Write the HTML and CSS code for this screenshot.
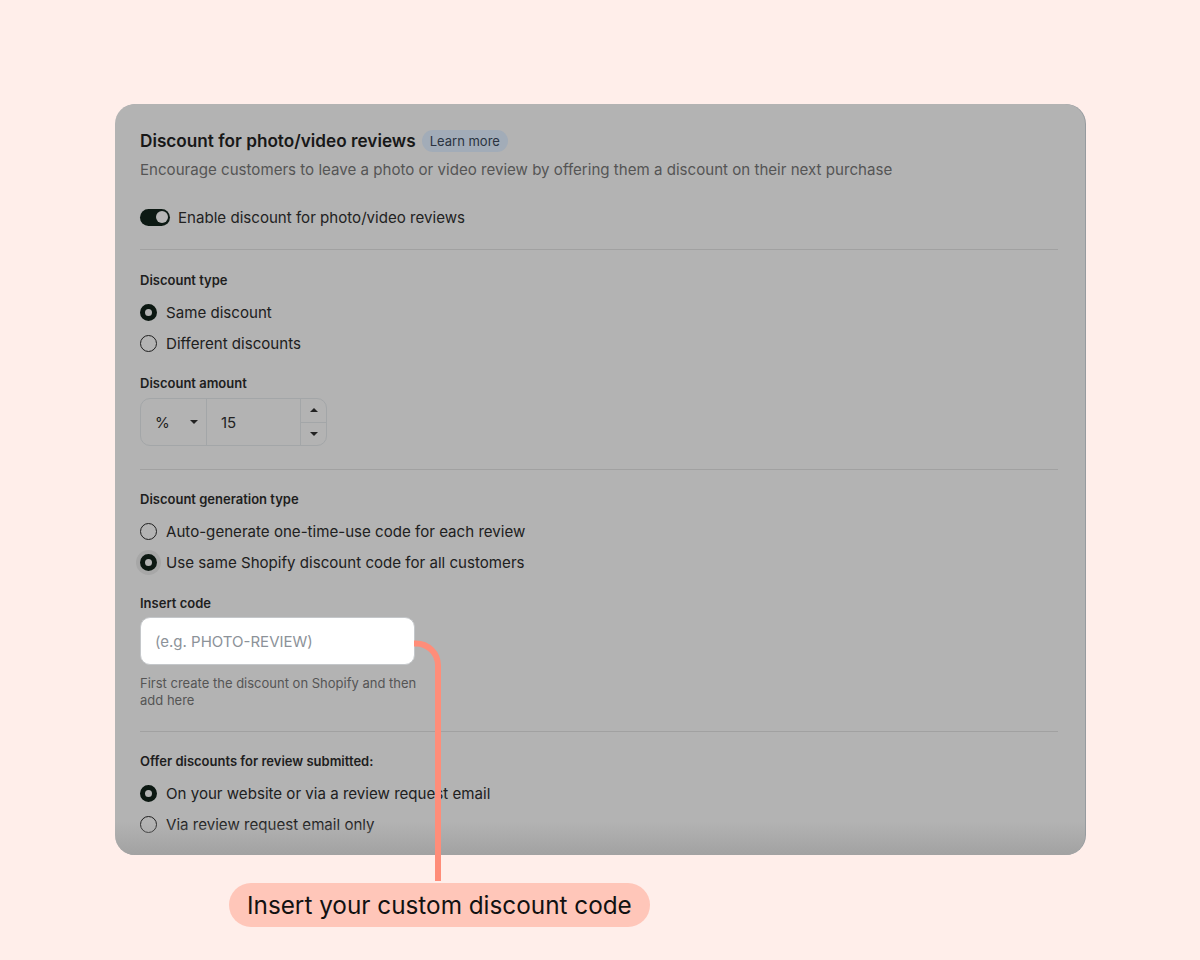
FILE: index.html
```html
<!DOCTYPE html>
<html lang="en">
<head>
<meta charset="utf-8">
<title>Discount for photo/video reviews</title>
<link rel="stylesheet" href="styles.css">
</head>
<body>
<div class="stage">
  <div class="card">
    <div class="title-row">
      <h2 class="title">Discount for photo/video reviews</h2>
      <span class="badge">Learn more</span>
    </div>
    <p class="subtitle">Encourage customers to leave a photo or video review by offering them a discount on their next purchase</p>

    <div class="toggle-row">
      <span class="toggle"><span class="knob"></span></span>
      <span class="toggle-label">Enable discount for photo/video reviews</span>
    </div>

    <hr class="divider">

    <div class="label">Discount type</div>
    <div class="radios">
      <div class="radio-row"><span class="radio checked"></span><span>Same discount</span></div>
      <div class="radio-row"><span class="radio"></span><span>Different discounts</span></div>
    </div>

    <div class="label label-sub">Discount amount</div>
    <div class="amount">
      <div class="seg seg-unit"><span>%</span><span class="caret"></span></div>
      <div class="seg seg-value">15</div>
      <div class="seg seg-spin">
        <span class="spin"><span class="tri-up"></span></span>
        <span class="spin"><span class="tri-down"></span></span>
      </div>
    </div>

    <hr class="divider divider-2">

    <div class="label label-after">Discount generation type</div>
    <div class="radios">
      <div class="radio-row"><span class="radio"></span><span>Auto-generate one-time-use code for each review</span></div>
      <div class="radio-row"><span class="radio checked focus"></span><span>Use same Shopify discount code for all customers</span></div>
    </div>

    <div class="label label-code">Insert code</div>
    <div class="code-input">(e.g. PHOTO-REVIEW)</div>
    <p class="help">First create the discount on Shopify and then<br>add here</p>

    <hr class="divider divider-3">

    <div class="label label-after">Offer discounts for review submitted:</div>
    <div class="radios">
      <div class="radio-row"><span class="radio checked"></span><span>On your website or via a review request email</span></div>
      <div class="radio-row"><span class="radio"></span><span>Via review request email only</span></div>
    </div>
  </div>

  <div class="callout">Insert your custom discount code</div>
</div>

<svg class="connector" width="1200" height="960" viewBox="0 0 1200 960" aria-hidden="true">
  <path d="M414 643.5 H416 A22 22 0 0 1 438 665.5 V881" fill="none" stroke="#ff8d79" stroke-width="6"/>
</svg>
</body>
</html>
```

FILE: styles.css
```css
* { box-sizing: border-box; }

html, body {
  margin: 0;
  padding: 0;
  background: #ffeeea;
  font-family: Inter, "Noto Sans", "Liberation Sans", sans-serif;
  color: #1b1b1b;
}

.stage {
  padding: 104px 0 0 115px;
}

.card {
  position: relative;
  width: 970px;
  height: 751px;
  overflow: hidden;
  background: #b3b3b3;
  border-radius: 20px;
  padding: 25px 25px 0 25px;
  box-shadow: 1px 0 0 #969b9f;
}

.card::after {
  content: "";
  position: absolute;
  left: 0;
  right: 0;
  bottom: 0;
  height: 34px;
  background: linear-gradient(to bottom, rgba(160,160,160,0), rgba(160,160,160,0.9));
  pointer-events: none;
}

.title-row {
  display: flex;
  align-items: center;
  gap: 6px;
  height: 24px;
}

.title {
  margin: 0;
  font-size: 17.2px;
  font-weight: 600;
  line-height: 24px;
  color: #181818;
}

.badge {
  display: inline-flex;
  align-items: center;
  height: 22px;
  padding: 0 8px;
  border-radius: 11px;
  background: #a2acb8;
  color: #2a3340;
  font-size: 13px;
}

.subtitle {
  margin: 5px 0 0 0;
  font-size: 15.1px;
  line-height: 24px;
  color: #555;
}

.toggle-row {
  display: flex;
  align-items: center;
  gap: 8px;
  height: 24px;
  margin-top: 23px;
  font-size: 15.1px;
  color: #222;
}

.toggle {
  display: flex;
  align-items: center;
  justify-content: flex-end;
  width: 30px;
  height: 17px;
  border-radius: 9px;
  background: #0d1a14;
  padding: 0 2.5px;
}

.knob {
  width: 12px;
  height: 12px;
  border-radius: 50%;
  background: #b6b6b6;
}

.divider {
  border: 0;
  height: 1px;
  background: #a1a1a1;
  margin: 20px 0 0 0;
  width: 918px;
}

.divider-2 { margin-top: 23px; }
.divider-3 { margin-top: 22px; }

.label {
  margin-top: 20px;
  font-size: 13px;
  font-weight: 600;
  line-height: 20px;
  color: #1e1e1e;
}

.label-sub { margin-top: 14px; }
.label-after { margin-top: 19px; }
.label-code { margin-top: 15px; }

.radios {
  margin-top: 7px;
  display: flex;
  flex-direction: column;
}

.radio-row {
  display: flex;
  align-items: center;
  gap: 9px;
  height: 31px;
  font-size: 15.1px;
  color: #202020;
}

.radio {
  position: relative;
  width: 17px;
  height: 17px;
  border-radius: 50%;
  border: 1.5px solid #1f1f1f;
  flex: none;
}

.radio.checked {
  border: 5px solid #0c1812;
}

.radio.focus {
  box-shadow: 0 0 0 4px #a7a7a7;
}

.amount {
  display: flex;
  width: 187px;
  height: 48px;
  margin-top: 5px;
  border: 1px solid #a3a6a8;
  border-radius: 10px;
  overflow: hidden;
}

.seg {
  display: flex;
  align-items: center;
  font-size: 15px;
  color: #222;
}

.seg-unit {
  width: 66px;
  padding: 0 0 0 14px;
  gap: 20px;
  border-right: 1px solid #a3a6a8;
}

.caret {
  width: 0;
  height: 0;
  border-left: 4px solid transparent;
  border-right: 4px solid transparent;
  border-top: 4px solid #222;
}

.seg-value {
  width: 94px;
  padding-left: 14px;
  border-right: 1px solid #a3a6a8;
}

.seg-spin {
  flex: 1;
  flex-direction: column;
  align-items: stretch;
}

.spin {
  flex: 1;
  display: flex;
  align-items: center;
  justify-content: center;
}

.spin + .spin { border-top: 1px solid #a3a6a8; }

.tri-up, .tri-down {
  width: 0;
  height: 0;
  border-left: 4px solid transparent;
  border-right: 4px solid transparent;
}

.tri-up { border-bottom: 4px solid #222; }
.tri-down { border-top: 4px solid #222; }

.code-input {
  display: flex;
  align-items: center;
  width: 275px;
  height: 48px;
  margin-top: 4px;
  padding-left: 14px;
  background: #fff;
  border: 1px solid #c4c7ca;
  border-radius: 10px;
  font-size: 15px;
  color: #8c9299;
}

.help {
  margin: 10px 0 0 0;
  font-size: 13px;
  line-height: 17px;
  color: #555;
}

.callout {
  display: inline-flex;
  align-items: center;
  height: 44px;
  margin: 28px 0 0 114px;
  padding: 0 18px;
  border-radius: 22px;
  background: #ffc6b9;
  font-size: 24.3px;
  color: #111;
}

.connector {
  position: absolute;
  left: 0;
  top: 0;
  pointer-events: none;
}
```
